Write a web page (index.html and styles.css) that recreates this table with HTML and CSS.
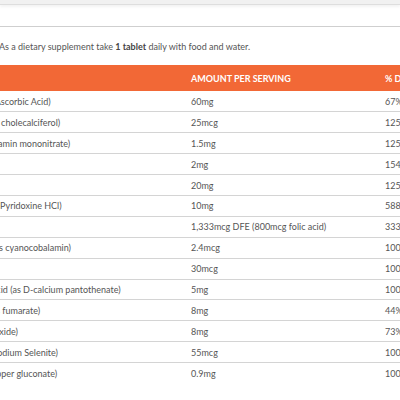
FILE: index.html
```html
<!DOCTYPE html>
<html lang="en">

<head>
  <meta charset="UTF-8">
  <meta name="viewport" content="width=device-width, initial-scale=1.0">
  <title>Supplement Facts</title>
  <link rel="stylesheet" href="styles.css">
</head>

<body>
  <!-- top strip -->
  <div class="top-strip"></div>
  <div class="tab-line"></div>

  <!-- directions -->
  <p class="directions">As a dietary supplement take <b>1 tablet</b> daily with food and water.</p>

  <!-- facts table -->
  <table class="facts">
    <colgroup>
      <col class="col-name">
      <col class="col-amount">
      <col class="col-dv">
    </colgroup>
    <thead>
      <tr>
        <th></th>
        <th>AMOUNT PER SERVING</th>
        <th>% DAILY VALUE</th>
      </tr>
    </thead>
    <tbody>
      <tr><td>Vitamin C (as Ascorbic Acid)</td><td>60mg</td><td>67%</td></tr>
      <tr><td>Vitamin D3 (as cholecalciferol)</td><td>25mcg</td><td>125%</td></tr>
      <tr><td>Thiamin (as thiamin mononitrate)</td><td>1.5mg</td><td>125%</td></tr>
      <tr><td>Riboflavin</td><td>2mg</td><td>154%</td></tr>
      <tr><td>Niacin</td><td>20mg</td><td>125%</td></tr>
      <tr><td>Vitamin B6 (as Pyridoxine HCl)</td><td>10mg</td><td>588%</td></tr>
      <tr><td>Folate</td><td>1,333mcg DFE (800mcg folic acid)</td><td>333%</td></tr>
      <tr><td>Vitamin B12 (as cyanocobalamin)</td><td>2.4mcg</td><td>100%</td></tr>
      <tr><td>Biotin</td><td>30mcg</td><td>100%</td></tr>
      <tr><td>Pantothenic Acid (as D-calcium pantothenate)</td><td>5mg</td><td>100%</td></tr>
      <tr><td>Iron (as ferrous fumarate)</td><td>8mg</td><td>44%</td></tr>
      <tr><td>Zinc (as Zinc Oxide)</td><td>8mg</td><td>73%</td></tr>
      <tr><td>Selenium (as Sodium Selenite)</td><td>55mcg</td><td>100%</td></tr>
      <tr><td>Copper (as Copper gluconate)</td><td>0.9mg</td><td>100%</td></tr>
    </tbody>
  </table>
</body>

</html>
```

FILE: styles.css
```css
* {
  margin: 0;
  padding: 0;
  box-sizing: border-box;
}

body {
  font-family: Lato, "Open Sans", sans-serif;
  font-size: 9px;
  color: #555;
  background: #fff;
  overflow: hidden;
}

/* 상단 회색 띠 */
.top-strip {
  height: 5px;
  background: #f1f1f1;
  border-bottom: 1px solid #dedede;
  box-shadow: 0 2px 3px rgba(0, 0, 0, 0.05);
}

.tab-line {
  height: 22px;
  border-bottom: 1px solid #cfcfcf;
}

.directions {
  margin: 13px 0 11px -1px;
  line-height: 14px;
  white-space: nowrap;
}

.directions b {
  font-weight: 700;
  color: #444;
}

/* 영양 성분 표 */
.facts {
  margin-left: -69px;
  width: 560px;
  border-collapse: collapse;
  table-layout: fixed;
}

.col-name {
  width: 250px;
}

.col-amount {
  width: 194px;
}

.facts th {
  background: #f26836;
  color: #fff;
  font-weight: 700;
  text-align: left;
  height: 26px;
  padding: 0 10px;
  white-space: nowrap;
}

.facts td {
  height: 20.9px;
  padding: 0 10px;
  border-bottom: 1px solid #d4d4d4;
  white-space: nowrap;
}

.facts tbody tr:last-child td {
  border-bottom: none;
}
```
